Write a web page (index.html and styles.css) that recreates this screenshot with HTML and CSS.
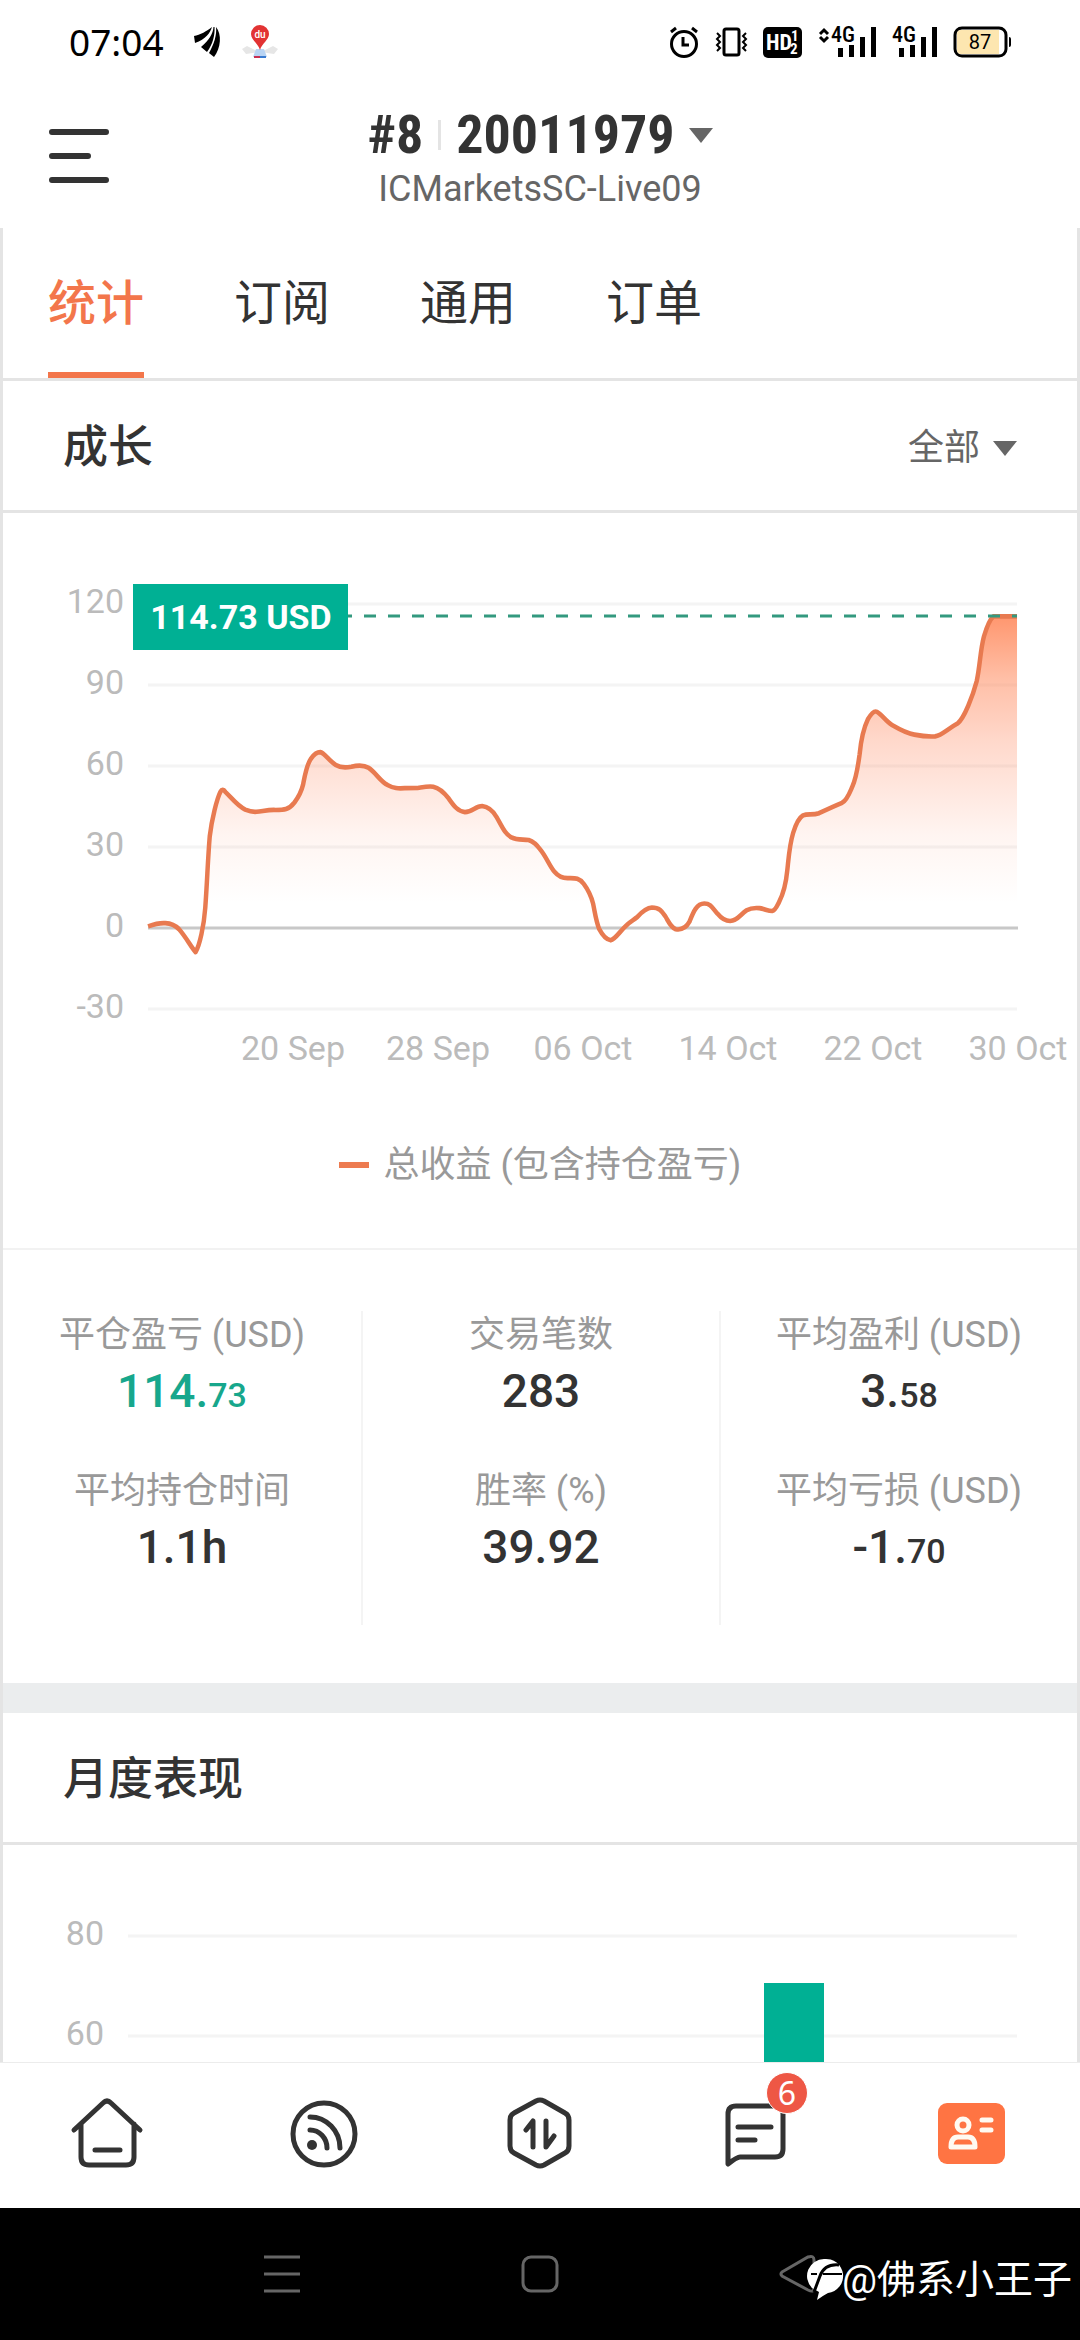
FILE: index.html
```html
<!DOCTYPE html>
<html lang="zh-CN">
<head>
<meta charset="utf-8">
<meta name="viewport" content="width=device-width, initial-scale=1">
<title>账户统计</title>
<link rel="stylesheet" href="styles.css">
</head>
<body>
<div class="status">
  <span class="clock">07:04</span>
  <svg class="status-app" width="28" height="32" viewBox="0 0 28 32" aria-hidden="true">
    <path d="M0 10C6 9 13 5 18 1C16 7 12 13 1 17Z"/>
    <path d="M19.500 1C19 8 15 14 7 21L13 26C19 18 21 9 20.500 1Z"/>
    <path d="M22 1C23 9 20 18 15 27L20 31C27 22 28 8 22 1Z"/>
  </svg>
  <svg class="status-map" width="36" height="34" viewBox="0 0 36 34" aria-hidden="true">
    <path d="M0 24L5 21L17 27L4 29ZM36 24L31 21L19 27L32 29Z" fill="#e6e6e6"/>
    <path d="M14 24H22L25 32H11Z" fill="#b9d4f3"/>
    <path d="M12 31H18V33H12Z" fill="#c72f52"/><path d="M18 31H24V33H18Z" fill="#3a7bd0"/>
    <path d="M18 25C16 18 9 15 9 9A9 9 0 0 1 27 9C27 15 20 18 18 25Z" fill="#e23333"/>
    <text x="18" y="13" text-anchor="middle" font-size="10" font-weight="500" fill="#fff">du</text>
  </svg>
  <div class="status-right">
    <svg width="30" height="32" viewBox="0 0 30 32" fill="none" stroke="#000" stroke-width="3" aria-hidden="true">
      <circle cx="15" cy="18" r="12.500"/><path d="M14 11V19H20M2 6L7 2M28 6L23 2"/>
    </svg>
    <svg width="32" height="32" viewBox="0 0 32 32" fill="none" stroke="#000" stroke-width="3" aria-hidden="true">
      <rect x="9" y="3" width="15" height="26" rx="2"/><path d="M2 7L5 10L2 13L5 16L2 19L5 22L2 25M31 7L28 10L31 13L28 16L31 19L28 22L31 25" stroke-width="2"/>
    </svg>
    <svg class="narrow" width="40" height="32" viewBox="0 0 40 32" aria-hidden="true">
      <rect y="1" width="39" height="31" rx="5"/>
      <g fill="#fff" font-weight="700"><text x="3" y="24" font-size="22">HD</text><text x="28" y="15" font-size="15">1</text><text x="27" y="28" font-size="15">2</text></g>
    </svg>
    <svg class="narrow" width="57" height="32" viewBox="0 0 57 32" aria-hidden="true">
      <path d="M1 8L5 4L9 8M1 11L5 15L9 11" fill="none" stroke="#000" stroke-width="3"/>
      <text x="12" y="16" font-size="22" font-weight="500">4G</text>
      <path d="M19 22h5v9h-5zM30 19h5v12h-5zM41 11h5v20h-5zM52 1h5v30h-5z"/>
    </svg>
    <svg class="narrow" width="45" height="32" viewBox="0 0 45 32" aria-hidden="true">
      <text x="0" y="16" font-size="22" font-weight="500">4G</text>
      <path d="M7 22h5v9h-5zM18 19h5v12h-5zM29 11h5v20h-5zM40 1h5v30h-5z"/>
    </svg>
    <svg width="58" height="32" viewBox="0 0 58 32" aria-hidden="true">
      <rect x="2" y="2" width="51" height="28" rx="7" fill="#fff" stroke="#000" stroke-width="3"/>
      <path d="M8 4H46V28H8Q4 28 4 24V8Q4 4 8 4Z" fill="#fde6b0"/><path d="M56 11Q58 11 58 13V19Q58 21 56 21Z"/>
      <text x="27" y="23" text-anchor="middle" font-size="20">87</text>
    </svg>
  </div>
</div>

<header class="topbar">
  <button class="menu" aria-label="菜单">
    <svg width="62" height="54" viewBox="0 0 62 54" stroke="#333" stroke-width="6" stroke-linecap="round"><path d="M4 3H58M4 27H40M4 51H58"/></svg>
  </button>
  <button class="account">
    <span class="account-line"><span>#8</span><i class="account-rule"></i><span>20011979</span><svg class="caret" width="24" height="15" viewBox="0 0 24 15"><path d="M0 0H24L12 15Z"/></svg></span>
    <span class="server">ICMarketsSC-Live09</span>
  </button>
</header>

<main class="content">
  <nav class="tabs" aria-label="账户">
    <a class="tab tab-active" href="#stats">统计</a>
    <a class="tab" href="#subscribe">订阅</a>
    <a class="tab" href="#general">通用</a>
    <a class="tab" href="#orders">订单</a>
  </nav>

  <section id="stats">
    <div class="section-head">
      <h2>成长</h2>
      <div class="range">
        <select aria-label="时间范围"><option>全部</option></select>
        <svg class="caret" width="24" height="15" viewBox="0 0 24 15"><path d="M0 0H24L12 15Z"/></svg>
      </div>
    </div>

    <svg class="chart" viewBox="3 513 1074 600" role="img" aria-label="总收益曲线">
      <defs>
        <linearGradient id="area" gradientUnits="userSpaceOnUse" x1="0" y1="214" x2="0" y2="1087">
          <stop offset="0" stop-color="#ff9167" stop-opacity=".95"/>
          <stop offset=".2" stop-color="#ff9167" stop-opacity=".58"/>
          <stop offset=".4" stop-color="#ff8a62" stop-opacity=".33"/>
          <stop offset=".7" stop-color="#ff8a62" stop-opacity=".09"/>
          <stop offset=".92" stop-color="#ff8a62" stop-opacity="0"/>
        </linearGradient>
      </defs>
      <path class="grid" d="M148 604H1017M148 685H1017M148 766H1017M148 847H1017M148 1009H1017"/>
      <g transform="translate(0 540) scale(.3444 .3571)">
        <path fill="url(#area)" d="M596 1087C602 950 603 900 609 830C615 780 630 725 640 705Q646 694 655 706C675 725 690 745 712 755C725 760 735 762 745 761C765 759 780 755 800 756C825 756 838 756 855 735C865 722 875 705 880 685C885 660 890 630 903 612C912 600 920 594 930 594C942 596 955 618 975 630C990 639 1005 638 1020 635C1040 630 1055 629 1070 638C1090 650 1105 677 1125 686C1145 696 1155 696 1175 695L1215 694C1235 691 1245 689 1258 691C1278 695 1290 708 1303 724C1318 745 1330 760 1350 762C1372 762 1380 745 1400 745C1418 747 1430 756 1442 776C1458 803 1465 822 1485 833C1502 841 1515 838 1535 840C1550 845 1560 855 1568 866C1585 885 1597 915 1610 929C1622 943 1632 947 1648 947C1670 947 1680 945 1695 963C1708 980 1716 995 1722 1018C1728 1045 1730 1065 1740 1087H2262V1014C2275 990 2282 965 2286 925C2290 890 2292 855 2303 820C2310 798 2320 778 2332 771C2345 766 2360 771 2378 765C2400 755 2425 744 2445 736C2460 728 2467 708 2475 690C2487 665 2491 635 2496 600C2500 560 2506 530 2520 502C2532 482 2540 478 2546 481C2560 488 2572 508 2590 518C2615 532 2635 542 2655 545C2675 549 2695 551 2715 550C2735 547 2750 530 2780 514C2800 500 2825 435 2836 395C2846 350 2846 310 2857 270C2866 240 2875 222 2884 214H2953V1087Z"/>
      </g>
      <path class="zero" d="M148 928H1018"/>
      <g transform="translate(0 540) scale(.3444 .3571)">
        <path class="line" d="M430 1082C450 1075 465 1072 480 1073C500 1074 512 1082 520 1090C540 1112 555 1140 568 1154C580 1135 592 1080 596 1030C602 950 603 900 609 830C615 780 630 725 640 705Q646 694 655 706C675 725 690 745 712 755C725 760 735 762 745 761C765 759 780 755 800 756C825 756 838 756 855 735C865 722 875 705 880 685C885 660 890 630 903 612C912 600 920 594 930 594C942 596 955 618 975 630C990 639 1005 638 1020 635C1040 630 1055 629 1070 638C1090 650 1105 677 1125 686C1145 696 1155 696 1175 695L1215 694C1235 691 1245 689 1258 691C1278 695 1290 708 1303 724C1318 745 1330 760 1350 762C1372 762 1380 745 1400 745C1418 747 1430 756 1442 776C1458 803 1465 822 1485 833C1502 841 1515 838 1535 840C1550 845 1560 855 1568 866C1585 885 1597 915 1610 929C1622 943 1632 947 1648 947C1670 947 1680 945 1695 963C1708 980 1716 995 1722 1018C1728 1045 1730 1065 1740 1090C1750 1108 1762 1120 1773 1121C1787 1118 1800 1095 1820 1078C1830 1069 1840 1064 1850 1056C1862 1043 1875 1030 1893 1029C1915 1029 1922 1040 1932 1054C1942 1070 1948 1085 1962 1090C1980 1093 1992 1087 2002 1069C2012 1045 2022 1018 2045 1018C2065 1018 2070 1033 2083 1046C2095 1060 2105 1067 2120 1067C2142 1066 2150 1048 2168 1037C2182 1029 2192 1030 2205 1031C2220 1033 2230 1039 2242 1039C2252 1037 2256 1025 2262 1014C2275 990 2282 965 2286 925C2290 890 2292 855 2303 820C2310 798 2320 778 2332 771C2345 766 2360 771 2378 765C2400 755 2425 744 2445 736C2460 728 2467 708 2475 690C2487 665 2491 635 2496 600C2500 560 2506 530 2520 502C2532 482 2540 478 2546 481C2560 488 2572 508 2590 518C2615 532 2635 542 2655 545C2675 549 2695 551 2715 550C2735 547 2750 530 2780 514C2800 500 2825 435 2836 395C2846 350 2846 310 2857 270C2866 240 2875 222 2884 214H2953"/>
      </g>
      <path class="level" d="M148 616H1017"/>
      <g class="axis axis-y"><text x="124" y="613">120</text><text x="124" y="694">90</text><text x="124" y="775">60</text><text x="124" y="856">30</text><text x="124" y="937">0</text><text x="124" y="1018">-30</text></g>
      <g class="axis axis-x"><text x="293" y="1060">20 Sep</text><text x="438" y="1060">28 Sep</text><text x="583" y="1060">06 Oct</text><text x="728" y="1060">14 Oct</text><text x="873" y="1060">22 Oct</text><text x="1018" y="1060">30 Oct</text></g>
      <rect x="133" y="584" width="215" height="66" fill="#00b094"/>
      <text class="tag" x="241" y="629">114.73 USD</text>
    </svg>
    <p class="legend"><i class="legend-mark"></i>总收益 (包含持仓盈亏)</p>

    <div class="stats">
      <dl class="stat-col">
        <div><dt>平仓盈亏 (USD)</dt><dd class="gain">114.<small>73</small></dd></div>
        <div><dt>平均持仓时间</dt><dd>1.1h</dd></div>
      </dl>
      <dl class="stat-col">
        <div><dt>交易笔数</dt><dd>283</dd></div>
        <div><dt>胜率 (%)</dt><dd>39.92</dd></div>
      </dl>
      <dl class="stat-col">
        <div><dt>平均盈利 (USD)</dt><dd>3.<small>58</small></dd></div>
        <div><dt>平均亏损 (USD)</dt><dd>-1.<small>70</small></dd></div>
      </dl>
    </div>
  </section>

  <section class="monthly">
    <div class="section-head"><h2>月度表现</h2></div>
    <svg class="chart" viewBox="3 1845 1074 218" role="img" aria-label="月度表现柱状图">
      <path class="grid" d="M128 1936H1017M128 2036H1017"/>
      <g class="axis axis-y"><text x="104" y="1945">80</text><text x="104" y="2045">60</text></g>
      <rect x="764" y="1983" width="60" height="80" fill="#00b094"/>
    </svg>
  </section>
</main>

<nav class="bottom" aria-label="主导航">
  <a href="#home" aria-label="首页"><svg class="icon" width="76" height="76" viewBox="0 0 76 76"><path d="M4 34L33 7Q37 3 41 7L70 34M11 28V61Q11 69 19 69H56Q64 69 64 61V28M25 54H50"/></svg></a>
  <a href="#signals" aria-label="信号"><svg class="icon" width="76" height="76" viewBox="0 0 76 76"><circle cx="38" cy="38" r="31"/><path d="M24 21A30 31 0 0 1 54 52M24 34A17 18 0 0 1 41 52"/><circle cx="26" cy="49" r="5" class="solid"/></svg></a>
  <a href="#trade" aria-label="交易"><svg class="icon" width="76" height="76" viewBox="0 0 76 76"><path d="M34 5Q38 3 42 5L63 17Q67 19 67 24V50Q67 55 63 57L42 69Q38 71 34 69L12 57Q8 55 8 50V24Q8 19 12 17ZM24 34L31 25V51M44 25V51L52 40"/></svg></a>
  <a href="#messages" aria-label="消息，6 条未读"><svg class="icon" width="76" height="76" viewBox="0 0 76 76"><path d="M10 68V18Q10 10 18 10H57Q65 10 65 18V53Q65 61 57 61H22Q19 61 10 68ZM20 31H53M20 44H37"/></svg><span class="badge">6</span></a>
  <a href="#profile" aria-label="账户"><svg width="76" height="76" viewBox="0 0 76 76" fill="none" stroke="#fffaf2" stroke-width="5" stroke-linecap="round" stroke-linejoin="round"><rect x="4" y="7" width="67" height="61" rx="9" fill="#ff7443" stroke="none"/><ellipse cx="29" cy="29" rx="6" ry="6"/><path d="M17 51Q17 41 24 41H34Q41 41 41 51ZM48 24H57M48 34H57"/></svg></a>
</nav>

<div class="system">
  <button aria-label="最近任务"><svg width="40" height="40" viewBox="0 0 40 40"><path d="M2 3H38M2 20H38M2 37H38"/></svg></button>
  <button aria-label="主屏幕"><svg width="40" height="40" viewBox="0 0 40 40"><rect x="3" y="3" width="34" height="34" rx="8"/></svg></button>
  <button aria-label="返回"><svg width="40" height="40" viewBox="0 0 40 40"><path d="M4 18L30 3Q36 1 36 6V34Q36 39 30 36L4 22Q2 20 4 18Z"/></svg></button>
  <div class="watermark">
    <svg width="36" height="44" viewBox="0 0 36 44" aria-hidden="true"><path d="M18 1A17 17 0 0 1 22 35Q18 37 11 42L13 34L6 30A17 17 0 0 1 18 1Z" fill="#fff"/><path d="M33 7C23 6 17 10 14 18L8 34" fill="none" stroke="#000" stroke-width="3"/><path d="M5 16H11M17 16H36" stroke="#000" stroke-width="2"/></svg>
    <span>@佛系小王子</span>
  </div>
</div>
</body>
</html>
```
FILE: styles.css
```css
* { box-sizing: border-box; }
body {
  margin: 0;
  height: 100vh;
  display: flex;
  flex-direction: column;
  background: #fff;
  color: #333;
  font-family: Roboto, "Noto Sans CJK SC", sans-serif;
}
button, select {
  padding: 0;
  border: 0;
  background: none;
  color: inherit;
  font: inherit;
  appearance: none;
}
a { color: inherit; text-decoration: none; }
h2, p, dl, dd { margin: 0; }
svg { display: block; flex: none; overflow: visible; }

.status {
  display: flex;
  align-items: center;
  padding: 12px 69px 16px;
  height: 88px;
  flex: none;
  color: #000;
}
.clock { font-family: "Noto Sans", sans-serif; font-size: 37px; line-height: 56px; }
.status-app { margin-left: 30px; }
.status-map { margin-left: 20px; }
.status-right { display: flex; gap: 16px; margin-left: auto; }
.narrow { font-family: "Roboto Condensed", Roboto, sans-serif; }

.topbar {
  display: grid;
  grid-template-columns: 1fr auto 1fr;
  padding: 10px 48px 14px;
  height: 140px;
  flex: none;
  align-items: center;
}
.menu { justify-self: start; }
.account { display: flex; flex-direction: column; align-items: center; padding-top: 6px; }
.account-line {
  display: flex;
  align-items: center;
  font-family: "Roboto Condensed", Roboto, sans-serif;
  font-size: 54px;
  font-weight: 700;
  line-height: 60px;
}
.account-rule { width: 3px; height: 30px; margin: 0 15px; background: #e4e4e4; }
.account-line .caret { margin-left: 14px; }
.caret { fill: #666; }
.server { color: #666; font-size: 36px; line-height: 48px; }

.content {
  flex: 1;
  min-height: 0;
  overflow: hidden;
  border: solid #e4e4e4;
  border-width: 0 3px;
}
.tabs { display: flex; gap: 90px; padding: 0 45px; border-bottom: 3px solid #e4e4e4; }
.tab { padding: 40px 0 32px; border-bottom: 6px solid transparent; font-size: 48px; line-height: 72px; }
.tab-active { border-color: #f3764b; color: #f3764b; font-weight: 500; }

.section-head {
  display: flex;
  align-items: center;
  justify-content: space-between;
  padding: 35px 60px 30px;
  border-bottom: 3px solid #e4e4e4;
}
h2 { font-size: 45px; font-weight: 500; line-height: 64px; }
.range { display: flex; align-items: center; gap: 12px; color: #666; font-size: 36px; line-height: 48px; }

.chart { width: 100%; height: auto; }
.grid { stroke: #f4f4f4; stroke-width: 3; }
.zero { stroke: #c8c8c8; stroke-width: 3; }
.line { fill: none; stroke: #e87a50; stroke-width: 13; stroke-linejoin: round; }
.level { stroke: #33997f; stroke-width: 3; stroke-dasharray: 12 12; }
.axis { fill: #bbb; font-size: 34px; }
.axis-y { text-anchor: end; }
.axis-x { text-anchor: middle; }
.tag { fill: #fff; font-size: 34px; font-weight: 700; text-anchor: middle; }

.legend {
  display: flex;
  align-items: center;
  justify-content: center;
  gap: 15px;
  padding: 28px 0 59px;
  border-bottom: 2px solid #f2f2f2;
  color: #999;
  font-size: 36px;
  line-height: 48px;
}
.legend-mark { width: 30px; height: 6px; background: #ed7b50; }

.stats { display: grid; grid-template-columns: repeat(3, 1fr); padding: 61px 0 58px; }
.stat-col { display: grid; gap: 44px; padding-bottom: 46px; text-align: center; }
.stat-col + .stat-col { border-left: 2px solid #f4f4f4; }
dt { color: #999; font-size: 36px; line-height: 48px; }
dd { font-size: 46px; font-weight: 500; line-height: 64px; }
dd small { font-size: 34px; line-height: 1; }
.gain { color: #17a78c; }

.monthly { border-top: 30px solid #ebedee; }

.bottom { display: grid; grid-template-columns: repeat(5, 1fr); border-top: 1px solid #ececec; padding: 33px 0 36px; flex: none; }
.bottom a { position: relative; display: flex; justify-content: center; }
.icon { fill: none; stroke: #333; stroke-width: 5; stroke-linecap: round; stroke-linejoin: round; }
.icon .solid { fill: #333; stroke: none; }
.badge {
  position: absolute;
  top: -24px;
  left: calc(50% + 10px);
  width: 42px;
  height: 42px;
  border: 1px solid #fff;
  border-radius: 50%;
  background: #ee5745;
  color: #fff;
  font: 32px/40px "Noto Sans", sans-serif;
  text-align: center;
}

.system {
  position: relative;
  display: flex;
  justify-content: center;
  gap: 218px;
  padding: 46px 0;
  flex: none;
  background: #000;
}
.system button svg { fill: none; stroke: #666; stroke-width: 3; }
.watermark {
  position: absolute;
  right: 8px;
  bottom: 30px;
  display: flex;
  align-items: center;
  color: #fff;
  font-size: 39px;
  line-height: 60px;
}
```
